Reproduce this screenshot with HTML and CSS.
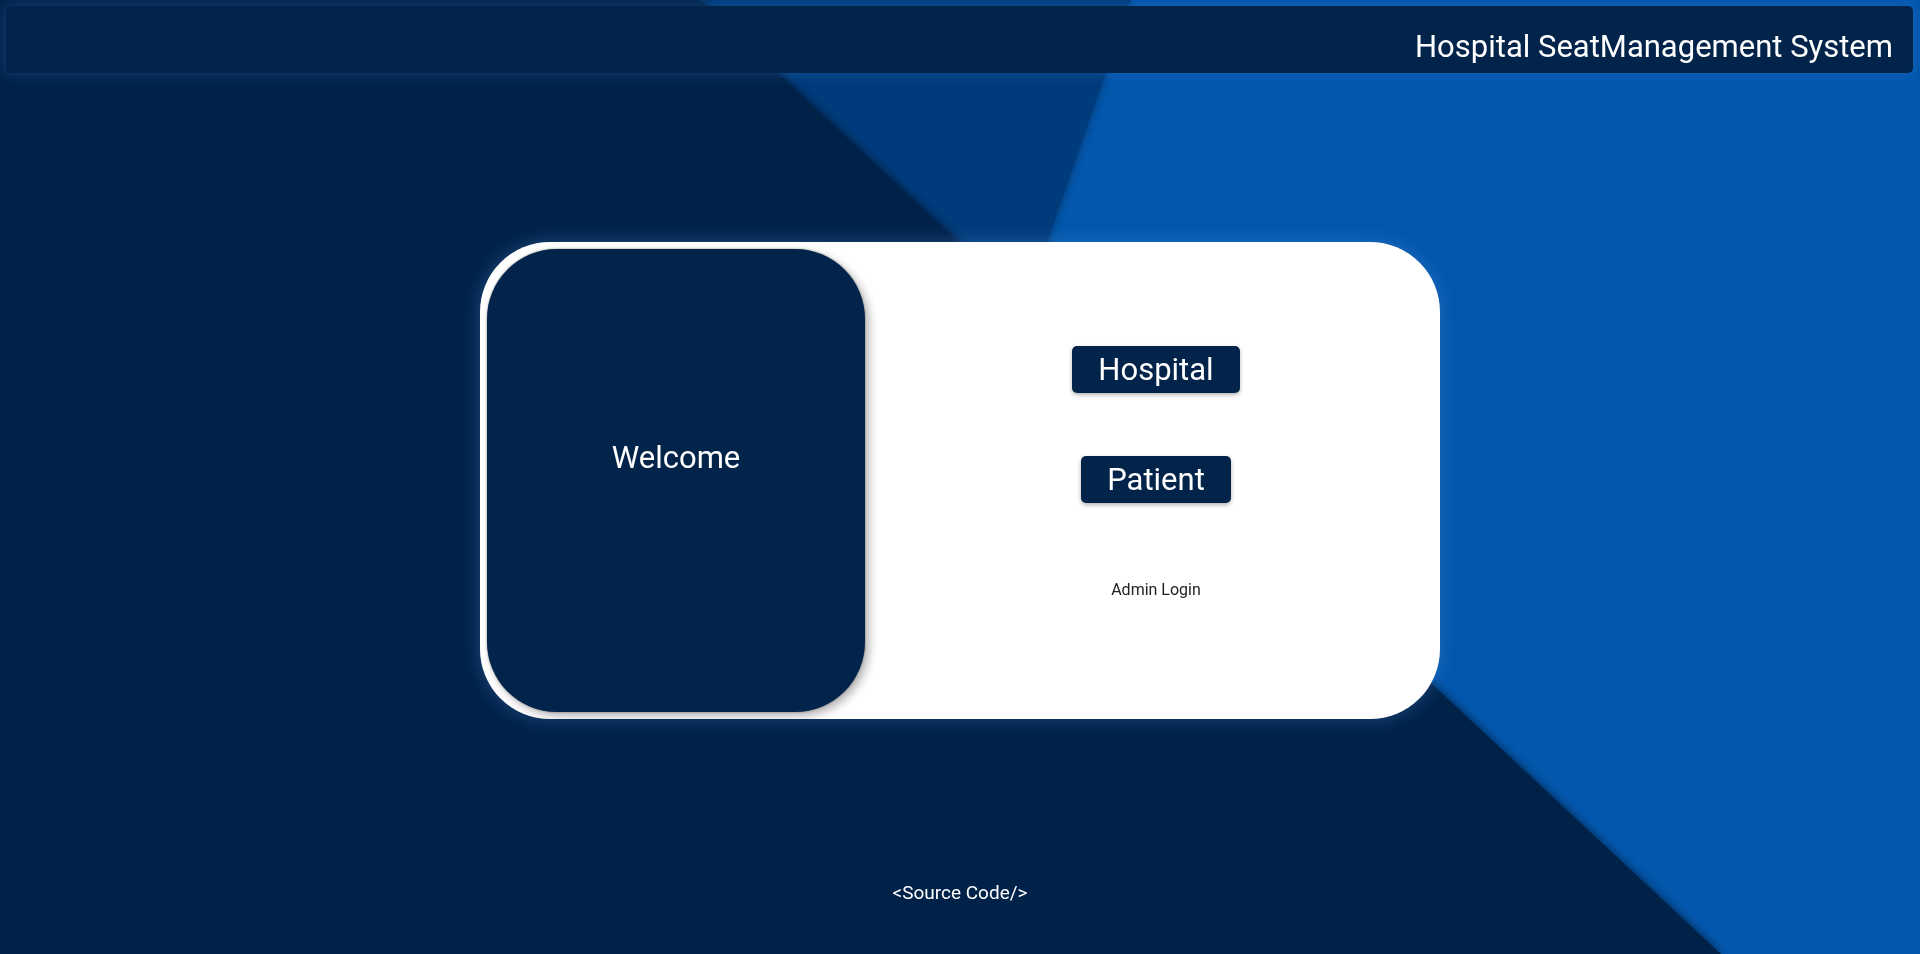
FILE: index.html
```html
<!DOCTYPE html>
<html lang="en">
<head>
<meta charset="utf-8">
<title>Hospital SeatManagement System</title>
<link rel="stylesheet" href="styles.css">
</head>
<body>
<svg class="bg" viewBox="0 0 1920 954" preserveAspectRatio="none" aria-hidden="true">
  <defs>
    <filter id="sh1" x="-10%" y="-10%" width="120%" height="120%">
      <feDropShadow dx="0" dy="0" stdDeviation="5" flood-color="#000" flood-opacity="0.35"/>
    </filter>
    <filter id="sh2" x="-10%" y="-10%" width="120%" height="120%">
      <feDropShadow dx="2" dy="0" stdDeviation="4" flood-color="#000" flood-opacity="0.45"/>
    </filter>
  </defs>
  <rect width="1920" height="954" fill="#0357ad"/>
  <polygon points="0,0 1131,0 802,954 0,954" fill="#043b7c" filter="url(#sh1)"/>
  <polygon points="0,0 700,0 1721,954 0,954" fill="#03244a" filter="url(#sh2)"/>
</svg>

<header class="topbar">
  <h1 class="title">Hospital SeatManagement System</h1>
</header>

<main class="stage">
  <section class="card">
    <div class="welcome">
      <h2 class="welcome-text">Welcome</h2>
    </div>
    <div class="choices">
      <button class="choice">Hospital</button>
      <button class="choice choice-second">Patient</button>
      <a class="admin" href="#">Admin Login</a>
    </div>
  </section>
</main>

<footer class="footer">
  <a class="source" href="#">&lt;Source Code/&gt;</a>
</footer>
</body>
</html>
```

FILE: styles.css
```css
* {
  box-sizing: border-box;
}

html, body {
  margin: 0;
  height: 100%;
}

body {
  position: relative;
  padding-top: 6px;
  font-family: Roboto, "Liberation Sans", Arial, sans-serif;
  background: #03244a;
  overflow: hidden;
}

.bg {
  position: fixed;
  left: 0;
  top: 0;
  width: 100%;
  height: 100%;
  z-index: -1;
}

.topbar {
  height: 67px;
  margin: 0 7px 0 6px;
  background: #03244a;
  border-radius: 5px;
  box-shadow: 0 0 14px rgba(60, 130, 210, 0.35);
  display: flex;
  justify-content: flex-end;
  align-items: center;
  padding: 14px 20px 0 20px;
}

.title {
  margin: 0;
  font-weight: 400;
  font-size: 31px;
  color: #ffffff;
  white-space: nowrap;
}

.stage {
  display: flex;
  justify-content: center;
  padding-top: 169px;
}

.card {
  width: 960px;
  height: 477px;
  background: #ffffff;
  border-radius: 70px;
  box-shadow: 0 0 18px rgba(90, 150, 220, 0.35);
  display: flex;
  padding: 7px 0 7px 7px;
}

.welcome {
  width: 378px;
  height: 100%;
  background: #03244a;
  border-radius: 70px;
  box-shadow: 0 0 2px rgba(0, 0, 0, 0.45), 4px 4px 10px rgba(0, 0, 0, 0.3);
  display: flex;
  align-items: center;
  justify-content: center;
  padding-bottom: 46px;
}

.welcome-text {
  margin: 0;
  font-weight: 400;
  font-size: 31px;
  color: #ffffff;
}

.choices {
  flex: 1;
  display: flex;
  flex-direction: column;
  align-items: center;
  padding-top: 97px;
  padding-left: 7px;
}

.choice {
  height: 47px;
  padding: 0 26px;
  border: none;
  border-radius: 5px;
  background: #03244a;
  color: #ffffff;
  font-family: Roboto, "Liberation Sans", Arial, sans-serif;
  font-size: 31px;
  box-shadow: 0 2px 4px rgba(0, 0, 0, 0.3);
  cursor: pointer;
}

.choice-second {
  margin-top: 63px;
}

.admin {
  margin-top: 77px;
  font-size: 16px;
  color: #222222;
  text-decoration: none;
}

.footer {
  margin-top: 162px;
  text-align: center;
}

.source {
  font-size: 19px;
  color: #ffffff;
  text-decoration: none;
}
```
